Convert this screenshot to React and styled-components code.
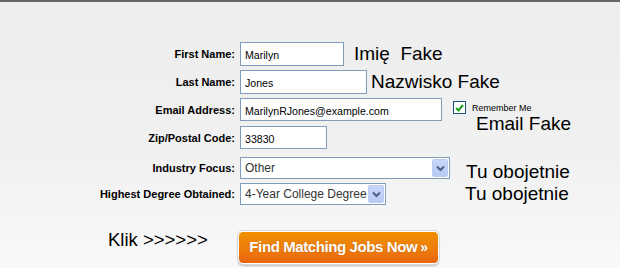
import styled, { createGlobalStyle } from 'styled-components'

const GlobalStyle = createGlobalStyle`
  html, body {
    margin: 0;
    padding: 0;
  }
  body {
    width: 620px;
    height: 268px;
    overflow: hidden;
    background: linear-gradient(to bottom, #ededed 0%, #f1f1f1 60%, #f9f9f9 100%);
    font-family: "Liberation Sans", Arial, sans-serif;
  }
`

const Page = styled.div`
  width: 620px;
  height: 268px;
  border-top: 2px solid #666;
  box-sizing: border-box;
`

const Form = styled.div`
  display: flex;
  flex-direction: column;
  padding-top: 40px;
`

const Row = styled.div`
  display: flex;
  align-items: center;
  height: ${p => p.$h}px;
  margin-top: ${p => p.$top || 0}px;
`

const Label = styled.label`
  width: 235px;
  text-align: right;
  font-size: 11px;
  font-weight: bold;
  color: #000;
  margin-right: 5px;
  white-space: nowrap;
`

const Input = styled.input`
  box-sizing: border-box;
  width: ${p => p.$w}px;
  height: 100%;
  border: 1px solid #7f9db9;
  background: #fff;
  padding: 2px 4px 0;
  font-family: "Liberation Sans", Arial, sans-serif;
  font-size: 10.6px;
  color: #000;
  outline: none;
`

const Note = styled.span`
  font-size: 19px;
  color: #000;
  margin-left: ${p => p.$gap}px;
  margin-top: ${p => p.$dy || 0}px;
  white-space: pre;
`

const Side = styled.div`
  align-self: flex-start;
  margin-top: 3px;
  margin-left: 11px;
  display: flex;
  flex-direction: column;
`

const Check = styled.label`
  display: flex;
  align-items: center;
  gap: 6px;
  font-size: 9px;
  color: #000;
`

const Box = styled.span`
  width: 13px;
  height: 13px;
  box-sizing: border-box;
  border: 1px solid #1c5180;
  background: #fff;
  display: flex;
  align-items: center;
  justify-content: center;
`

const SubNote = styled.span`
  font-size: 19px;
  color: #000;
  margin-left: 23px;
  margin-top: 0;
  line-height: 19px;
`

const Select = styled.div`
  box-sizing: border-box;
  width: ${p => p.$w}px;
  height: 100%;
  border: 1px solid #7f9db9;
  background: #fff;
  display: flex;
  align-items: stretch;
  padding: 1px;
`

const SelectText = styled.span`
  flex: 1;
  display: flex;
  align-items: center;
  padding-left: 3px;
  font-size: 12px;
  color: #333;
  white-space: nowrap;
  overflow: hidden;
`

const Arrow = styled.span`
  width: 16px;
  box-sizing: border-box;
  border: 1px solid #bccaf4;
  background: linear-gradient(to bottom, #c8d6fb, #b7c9f6);
  border-radius: 2px;
  display: flex;
  align-items: center;
  justify-content: center;
`

const ActionRow = styled.div`
  display: flex;
  align-items: flex-start;
  margin-top: 26px;
  padding-left: 108px;
`

const Klik = styled.span`
  font-size: 18.5px;
  color: #000;
  width: 130px;
  line-height: 18px;
  white-space: nowrap;
`

const Button = styled.button`
  box-sizing: border-box;
  width: 201px;
  height: 33px;
  border: 1px solid #fff;
  border-radius: 5px;
  background: linear-gradient(to bottom, #f08f00 0%, #ee7f0a 50%, #e8650f 100%);
  box-shadow: 0 0 0 1px #d8d8d8, 0 2px 2px rgba(0, 0, 0, 0.25);
  color: #fff;
  font-family: "Liberation Sans", Arial, sans-serif;
  font-weight: bold;
  font-size: 15px;
  letter-spacing: -0.4px;
  text-shadow: 0 0 1px rgba(140, 60, 0, 0.6);
  padding: 0 0 2px;
  cursor: pointer;
`

const Chev = styled.span`
  font-size: 14px;
  margin-left: 3px;
`

function ArrowIcon() {
  return (
    <svg width="9" height="7" viewBox="0 0 9 7">
      <path d="M1 1.5 L4.5 5 L8 1.5" fill="none" stroke="#4d6185" strokeWidth="2" />
    </svg>
  )
}

export default function App() {
  return (
    <Page>
      <GlobalStyle />
      <Form>
        <Row $h={24}>
          <Label>First Name:</Label>
          <Input $w={104} defaultValue="Marilyn" />
          <Note $gap={10}>{'Imię  Fake'}</Note>
        </Row>
        <Row $h={24} $top={4}>
          <Label>Last Name:</Label>
          <Input $w={127} defaultValue="Jones" />
          <Note $gap={4}>Nazwisko Fake</Note>
        </Row>
        <Row $h={23} $top={4}>
          <Label>Email Address:</Label>
          <Input $w={202} defaultValue="MarilynRJones@example.com" />
          <Side>
            <Check>
              <Box>
                <svg width="9" height="8" viewBox="0 0 9 8">
                  <path d="M1 4 L3.5 6.5 L8 1" fill="none" stroke="#21a121" strokeWidth="2" />
                </svg>
              </Box>
              Remember Me
            </Check>
            <SubNote>Email Fake</SubNote>
          </Side>
        </Row>
        <Row $h={23} $top={5}>
          <Label>Zip/Postal Code:</Label>
          <Input $w={87} defaultValue="33830" />
        </Row>
        <Row $h={22} $top={8}>
          <Label>Industry Focus:</Label>
          <Select $w={210}>
            <SelectText>Other</SelectText>
            <Arrow><ArrowIcon /></Arrow>
          </Select>
          <Note $gap={16} $dy={8}>Tu obojetnie</Note>
        </Row>
        <Row $h={22} $top={4}>
          <Label>Highest Degree Obtained:</Label>
          <Select $w={146}>
            <SelectText>4-Year College Degree</SelectText>
            <Arrow><ArrowIcon /></Arrow>
          </Select>
          <Note $gap={79}>Tu obojetnie</Note>
        </Row>
        <ActionRow>
          <Klik>{'Klik >>>>>>'}</Klik>
          <Button>
            Find Matching Jobs Now<Chev>»</Chev>
          </Button>
        </ActionRow>
      </Form>
    </Page>
  )
}
